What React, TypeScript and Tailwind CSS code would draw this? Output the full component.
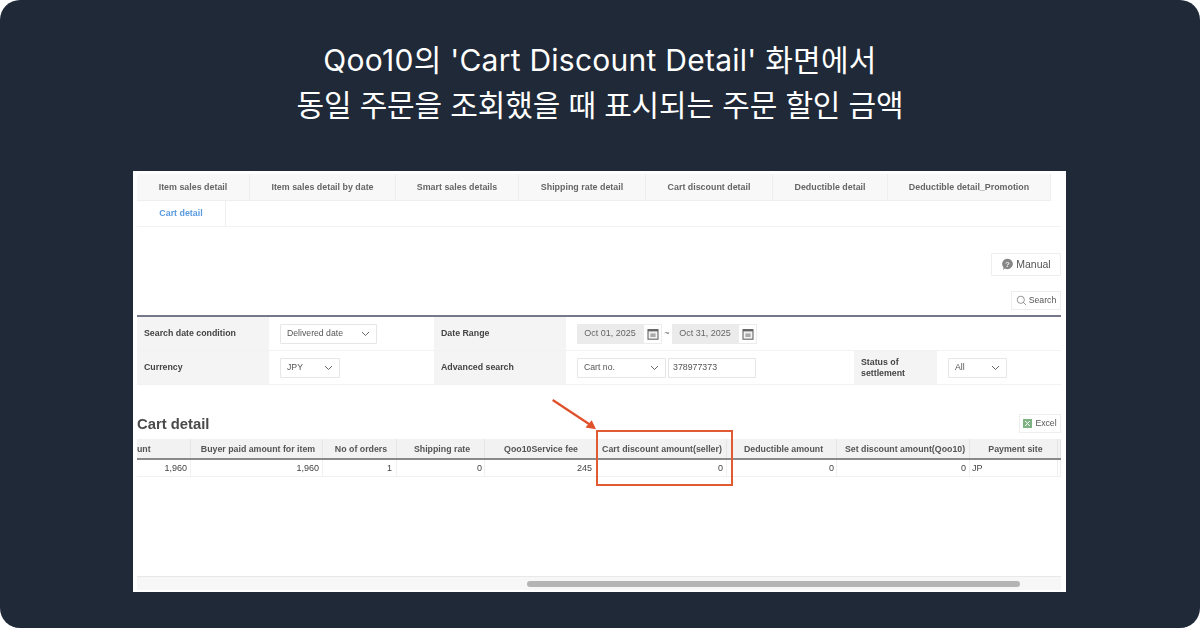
import React from "react";

const tabs: [string, string][] = [
  ["Item sales detail", "w-[113px]"],
  ["Item sales detail by date", "w-[146px]"],
  ["Smart sales details", "w-[123px]"],
  ["Shipping rate detail", "w-[127px]"],
  ["Cart discount detail", "w-[127px]"],
  ["Deductible detail", "w-[115px]"],
  ["Deductible detail_Promotion", "w-[163px]"],
];

const Chevron = () => (
  <svg width="9" height="6" viewBox="0 0 9 6" fill="none" className="shrink-0">
    <path d="M1 1l3.5 3.5L8 1" stroke="#555" strokeWidth="0.9" />
  </svg>
);

const Select = ({ label, w }: { label: string; w: string }) => (
  <div className={`${w} h-[20px] border border-[#e6e6e6] rounded-[1px] flex items-center justify-between pl-[6px] pr-[6px] text-[8.7px] text-[#555]`}>
    <span>{label}</span>
    <Chevron />
  </div>
);

const Cal = () => (
  <div className="w-[19px] h-[20px] border border-[#ececec] flex items-center justify-center">
    <svg width="12" height="12" viewBox="0 0 12 12" fill="none">
      <rect x="1" y="1.6" width="10" height="9.6" fill="#f2f2f2" stroke="#666" strokeWidth="1.1" />
      <rect x="1" y="1.4" width="10" height="2" fill="#666" />
      <rect x="3.4" y="5.4" width="5.2" height="3.6" fill="#aaa" />
    </svg>
  </div>
);

const DateBox = ({ label }: { label: string }) => (
  <div className="w-[66px] h-[20px] bg-[#ebebeb] flex items-center justify-center text-[9px] text-[#666]">{label}</div>
);

const Label = ({ children, w }: { children: React.ReactNode; w: string }) => (
  <div className={`${w} h-full bg-[#f4f4f4] flex items-center pl-[7px] text-[8.8px] leading-[11px] font-bold text-[#444]`}>{children}</div>
);

const cols = "grid grid-cols-[54px_132px_74px_88px_113px_129px_110px_133px_88px_3px]";
const heads: [string, string][] = [
  ["unt", "justify-start"],
  ["Buyer paid amount for item", "justify-center pl-[3px]"],
  ["No of orders", "justify-center pl-[3px]"],
  ["Shipping rate", "justify-center pl-[3px]"],
  ["Qoo10Service fee", "justify-center"],
  ["Cart discount amount(seller)", "justify-center"],
  ["Deductible amount", "justify-center pl-[4px]"],
  ["Set discount amount(Qoo10)", "justify-center pl-[4px]"],
  ["Payment site", "justify-center pl-[4px]"],
  ["", ""],
];
const vals: [string, string][] = [
  ["1,960", "pr-[3px] justify-end"],
  ["1,960", "pr-[3px] justify-end"],
  ["1", "pr-[4px] justify-end"],
  ["0", "pr-[2px] justify-end"],
  ["245", "pr-[5px] justify-end"],
  ["0", "pr-[3px] justify-end"],
  ["0", "pr-[2px] justify-end"],
  ["0", "pr-[3px] justify-end"],
  ["JP", "pl-[2px] justify-start"],
  ["", ""],
];

export default function App() {
  return (
    <div className="w-[1200px] h-[628px] bg-white overflow-hidden">
      <div className="h-full rounded-[20px] bg-[#1f2937] flex flex-col items-center" style={{ fontFamily: "Inter, 'Noto Sans CJK KR', sans-serif" }}>
        <div className="mt-[38px] h-[133px] text-center text-white text-[30px] leading-[45px]">
          <p className="tracking-[0.25px]">Qoo10의 'Cart Discount Detail' 화면에서</p>
          <p className="tracking-[-0.15px]">동일 주문을 조회했을 때 표시되는 주문 할인 금액</p>
        </div>
        <div
          className="relative w-[933px] h-[421px] mr-[1px] bg-white pl-[4px] pt-[3px] flex flex-col overflow-hidden blur-[0.6px]"
          style={{ fontFamily: "'Liberation Sans', Arial, sans-serif" }}
        >
          <div className="w-[924px] flex flex-col grow">
            <div className="flex h-[27px]">
              {tabs.map(([t, w]) => (
                <div key={t} className={`${w} bg-[#f8f8f8] border-r border-b border-[#eeeeee] flex items-center justify-center pt-[2px] text-[8.9px] font-bold text-[#666]`}>
                  {t}
                </div>
              ))}
            </div>
            <div className="h-[26px] border-b border-[#f2f2f2] flex">
              <div className="w-[89px] border-r border-[#eeeeee] flex items-center justify-center text-[8.9px] font-bold text-[#5b9be0]">Cart detail</div>
            </div>
            <div className="mt-[26px] self-end w-[70px] h-[23px] border border-[#eeeeee] rounded-[1px] flex items-center justify-center gap-[2px] text-[10.5px] text-[#555]">
              <svg width="13" height="13" viewBox="0 0 13 13">
                <path d="M6.5 0.8a5.4 5.2 0 1 1-2.6 9.8L2 12l.5-2.6A5.4 5.2 0 0 1 6.5 .8z" fill="#858585" />
                <text x="6.5" y="9" textAnchor="middle" fontSize="8" fontWeight="700" fill="#e8e8e8">?</text>
              </svg>
              Manual
            </div>
            <div className="mt-[15px] self-end w-[50px] h-[19px] border border-[#eeeeee] flex items-center justify-center gap-[2px] text-[8.7px] text-[#555]">
              <svg width="11" height="11" viewBox="0 0 11 11" fill="none">
                <circle cx="4.8" cy="4.8" r="3.6" stroke="#888" strokeWidth="0.9" />
                <path d="M7.4 7.4l2.6 2.6" stroke="#888" strokeWidth="0.9" />
              </svg>
              Search
            </div>
            <div className="mt-[5px] border-t-2 border-[#77778a]">
              <div className="h-[34px] flex items-center border-b border-[#f2f2f2]">
                <Label w="w-[132px]">Search date condition</Label>
                <div className="w-[165px] pl-[11px]"><Select label="Delivered date" w="w-[97px]" /></div>
                <Label w="w-[132px]">Date Range</Label>
                <div className="pl-[11px] flex items-center">
                  <DateBox label="Oct 01, 2025" />
                  <Cal />
                  <span className="w-[10px] text-center text-[9px] text-[#666]">~</span>
                  <DateBox label="Oct 31, 2025" />
                  <Cal />
                </div>
              </div>
              <div className="h-[34px] flex items-center border-b border-[#f2f2f2]">
                <Label w="w-[132px]">Currency</Label>
                <div className="w-[165px] pl-[11px]"><Select label="JPY" w="w-[60px]" /></div>
                <Label w="w-[132px]">Advanced search</Label>
                <div className="w-[288px] pl-[11px] flex items-center gap-[2px]">
                  <Select label="Cart no." w="w-[89px]" />
                  <div className="w-[88px] h-[20px] border border-[#e6e6e6] flex items-center pl-[4px] text-[8.8px] text-[#555]">378977373</div>
                </div>
                <Label w="w-[83px]">Status of<br />settlement</Label>
                <div className="pl-[11px]"><Select label="All" w="w-[59px]" /></div>
              </div>
            </div>
            <div className="mt-[29px] h-[25px] flex items-start justify-between">
              <h2 className="text-[14.8px] leading-[20px] font-bold text-[#4a4a4a]">Cart detail</h2>
              <div className="w-[42px] h-[19px] border border-[#eeeeee] flex items-center justify-center gap-[3px] text-[8.7px] text-[#555]">
                <svg width="9" height="9" viewBox="0 0 9 9">
                  <rect width="9" height="9" fill="#7fb283" />
                  <path d="M2.2 2l4.6 5M6.8 2L2.2 7" stroke="#fff" strokeWidth="1" />
                </svg>
                Excel
              </div>
            </div>
            <div className={`${cols} h-[19px] bg-[#f2f2f2] border-b-2 border-[#8a8a8a] box-content`}>
              {heads.map(([h, c], i) => (
                <div key={i} className={`border-r border-[#e6e6e6] flex items-center pt-[2px] text-[8.8px] font-bold text-[#555] whitespace-nowrap overflow-hidden ${c}`}>
                  {h}
                </div>
              ))}
            </div>
            <div className={`${cols} h-[17px] border-b border-[#f0f0f0]`}>
              {vals.map(([v, c], i) => (
                <div key={i} className={`border-r border-[#f0f0f0] flex items-center pt-[1px] text-[9px] text-[#444] ${c}`}>
                  {v}
                </div>
              ))}
            </div>
            <div className="mt-auto mb-[2px] h-[14px] bg-[#f7f7f7] border-t border-[#e8e8e8] flex items-center pl-[390px]">
              <div className="w-[493px] h-[6px] rounded-full bg-[#b4b4b4]" />
            </div>
          </div>
          <div className="absolute left-[463px] top-[259px] w-[137px] h-[56px] border-2 border-[#e05a33]" />
          <svg className="absolute left-[415px] top-[226px]" width="50" height="36" viewBox="0 0 50 36" fill="none">
            <path d="M4.7 3L41 27" stroke="#e0502a" strokeWidth="2.2" />
            <path d="M48 32.3L43.7 23.2L37.5 30.5Z" fill="#e0502a" />
          </svg>
        </div>
      </div>
    </div>
  );
}
